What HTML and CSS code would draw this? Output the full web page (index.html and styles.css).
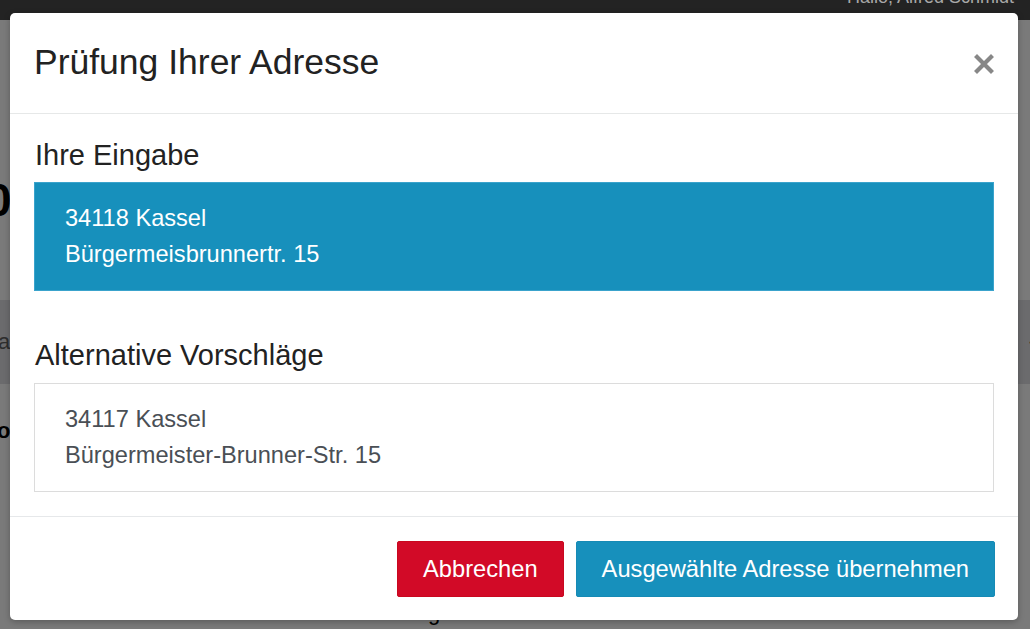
FILE: index.html
```html
<!DOCTYPE html>
<html lang="de">
    <head>
        <meta charset="UTF-8">
        <title>Prüfung Ihrer Adresse</title>
        <meta name="viewport" content="width=device-width,initial-scale=1.0">
        <link rel="stylesheet" href="styles.css">
    </head>
    <body>
        <div class="navbar">
            <span class="navUser">Hallo, Alfred Schmidt</span>
        </div>
        <div class="page">
            <div class="pageTitle">0</div>
            <div class="band">
                <span class="bandLeft">a</span>
                <span class="bandRight">‹</span>
            </div>
            <div class="pageBold">o</div>
            <div class="pageFoot">g</div>
        </div>

        <div class="modal">
            <div class="modalHead">
                <h3 class="modalTitle">Prüfung Ihrer Adresse</h3>
                <button class="closeBtn" aria-label="Schließen">
                    <svg width="20" height="20" viewBox="0 0 20 20">
                        <path d="M3 3 L17 17 M17 3 L3 17" stroke="#878787" stroke-width="4.2" stroke-linecap="square"/>
                    </svg>
                </button>
            </div>
            <div class="modalBody">
                <h4 class="sectionHead">Ihre Eingabe</h4>
                <div class="addrBox selected">
                    <p>34118 Kassel</p>
                    <p>Bürgermeisbrunnertr. 15</p>
                </div>
                <h4 class="sectionHead second">Alternative Vorschläge</h4>
                <div class="addrBox">
                    <p>34117 Kassel</p>
                    <p>Bürgermeister-Brunner-Str. 15</p>
                </div>
            </div>
            <div class="modalFoot">
                <button class="btn btnDanger">Abbrechen</button>
                <button class="btn btnPrimary">Ausgewählte Adresse übernehmen</button>
            </div>
        </div>
    </body>
</html>
```

FILE: styles.css
```css
html, body{
    margin: 0;
    padding: 0;
}
body{
    width: 1030px;
    height: 629px;
    overflow: hidden;
    background: #7a7a7a;
    font-family: "Liberation Sans", Arial, sans-serif;
    position: relative;
}
.navbar{
    height: 20px;
    background: #232323;
    overflow: hidden;
    display: flex;
    justify-content: flex-end;
    padding-right: 16px;
}
.navUser{
    font-size: 18px;
    line-height: 18px;
    margin-top: -12px;
    color: #a8a8a8;
}
.page{
    position: relative;
}
.pageTitle{
    margin: 150px 0 0 -14px;
    font-size: 46px;
    line-height: 60px;
    font-weight: bold;
    color: #000;
}
.band{
    margin-top: 70px;
    height: 84px;
    background: #6b6b6d;
    display: flex;
    align-items: center;
    justify-content: space-between;
    font-size: 22px;
    color: #2e2e2e;
}
.bandLeft{
    margin-left: -2px;
}
.bandRight{
    margin-right: -6px;
    font-weight: bold;
    color: #111;
}
.pageBold{
    margin: 34px 0 0 -3px;
    font-size: 22px;
    font-weight: bold;
    color: #000;
}
.pageFoot{
    margin: 156px 0 0 428px;
    font-size: 22px;
    color: #000;
}

/* dialog */
.modal{
    position: absolute;
    top: 13px;
    left: 10px;
    width: 1008px;
    height: 607px;
    background: #fff;
    border-radius: 5px;
    box-shadow: 0 2px 6px rgba(0,0,0,0.25);
    display: flex;
    flex-direction: column;
    overflow: hidden;
}
.modalHead{
    display: flex;
    align-items: center;
    justify-content: space-between;
    padding: 30px 24px 31px 24px;
    border-bottom: 1px solid #e6e8e8;
}
.modalTitle{
    margin: 0;
    font-size: 35.5px;
    line-height: 39px;
    font-weight: normal;
    color: #222;
}
.closeBtn{
    border: 0;
    background: none;
    padding: 0;
    margin: 3px 0 0 0;
    width: 20px;
    height: 20px;
    cursor: pointer;
}
.closeBtn svg{
    display: block;
}
.modalBody{
    padding: 24px 24px 23px 24px;
    border-bottom: 1px solid #e6e8ea;
    flex: 1;
}
.sectionHead{
    margin: 0 0 10px 1px;
    font-size: 29px;
    line-height: 34px;
    font-weight: normal;
    color: #222;
}
.sectionHead.second{
    margin-top: 47px;
    margin-bottom: 11px;
}
.addrBox{
    border: 1px solid #dcdcdc;
    padding: 17px 30px 18px 30px;
    color: #4a4f55;
}
.addrBox.selected{
    background: #1790bc;
    border-color: #3aa3cc;
    color: #fff;
}
.addrBox>p{
    margin: 0;
    font-size: 23.6px;
    line-height: 36px;
}
.modalFoot{
    display: flex;
    justify-content: flex-end;
    gap: 12px;
    padding: 24px 23px 23px 24px;
}
.btn{
    height: 56px;
    padding: 0 25px;
    border: 1px solid transparent;
    border-radius: 2px;
    font-family: "Liberation Sans", Arial, sans-serif;
    font-size: 23.7px;
    color: #fff;
    cursor: pointer;
}
.btnDanger{
    background: #d20a27;
    border-color: #c9081f;
}
.btnPrimary{
    background: #1790bc;
    border-color: #168ab5;
}
```
